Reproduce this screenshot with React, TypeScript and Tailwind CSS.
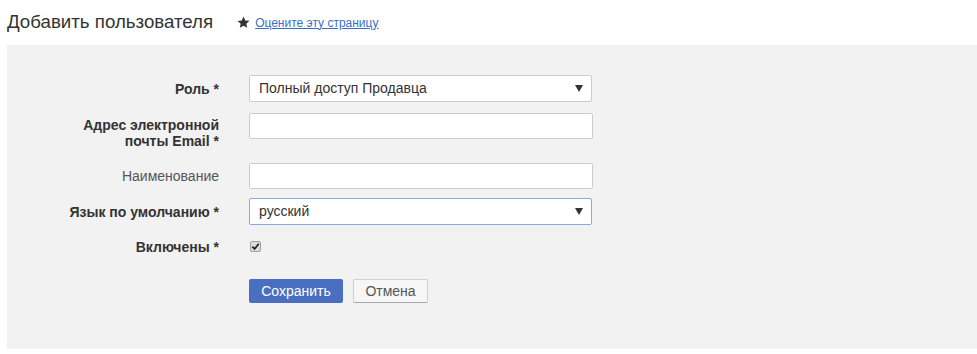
import React from "react";

function Select({ value, focused }: { value: string; focused?: boolean }) {
  return (
    <div
      className={`flex h-[27px] w-[343px] items-center justify-between rounded-[2px] border bg-white pl-[9px] pr-[8px] text-[14px] text-[#333] ${
        focused ? "border-[#86a9e8]" : "border-[#cccccc]"
      }`}
    >
      <span>{value}</span>
      <svg width="8" height="7" viewBox="0 0 8 7">
        <path d="M0 0 H8 L4 7 Z" fill="#333" />
      </svg>
    </div>
  );
}

function Input() {
  return <div className="h-[26px] w-[344px] rounded-[2px] border border-[#cccccc] bg-white" />;
}

function Label({ children, bold = true, extra = "" }: { children: React.ReactNode; bold?: boolean; extra?: string }) {
  return (
    <div
      className={`w-[150px] shrink-0 text-right text-[14px] leading-[16px] ${
        bold ? "font-bold text-[#333]" : "font-normal text-[#555]"
      } ${extra}`}
    >
      {children}
    </div>
  );
}

function Star() {
  return (
    <svg width="13" height="13" viewBox="0 0 24 24">
      <path
        d="M12 1l3.3 7.1 7.7.8-5.8 5.2 1.7 7.7L12 17.9l-6.9 3.9 1.7-7.7L1 9l7.7-.8z"
        fill="#333"
      />
    </svg>
  );
}

export default function App() {
  return (
    <div className="h-[354px] w-[977px] bg-white" style={{ fontFamily: '"Liberation Sans", Arial, sans-serif' }}>
      <div className="flex h-[45px] items-center pb-[2px] pl-[7px]">
        <h1 className="text-[18.7px] font-normal leading-[22px] text-[#333]">Добавить пользователя</h1>
        <div className="ml-[24px] flex items-center gap-[5px] pt-[2px]">
          <Star />
          <a href="#" className="text-[12px] leading-[14px] text-[#3b6fc6] underline">
            Оцените эту страницу
          </a>
        </div>
      </div>
      <div className="h-[304px] w-[970px] ml-[7px] bg-[#f2f2f2] pl-[62px] pt-[30px]">
        <div className="flex items-center gap-[30px]">
          <Label>Роль *</Label>
          <Select value="Полный доступ Продавца" />
        </div>
        <div className="mt-[11px] flex items-start gap-[30px]">
          <Label extra="pt-[4px]">{"Адрес электронной почты Email\u00a0*"}</Label>
          <Input />
        </div>
        <div className="mt-[14px] flex items-center gap-[30px]">
          <Label bold={false}>Наименование</Label>
          <Input />
        </div>
        <div className="mt-[9px] flex items-center gap-[30px]">
          <Label>Язык по умолчанию *</Label>
          <Select value="русский" focused />
        </div>
        <div className="mt-[12px] flex h-[20px] items-center gap-[30px]">
          <Label>Включены *</Label>
          <div className="-mt-[2px] ml-[1px] flex h-[11px] w-[11px] items-center justify-center rounded-[2px] border border-[#a0a0a0] bg-[#dcdcdc]">
            <svg width="9" height="9" viewBox="0 0 10 10">
              <path d="M1.5 5.2 L4 7.6 L8.6 2" stroke="#222" strokeWidth="2" fill="none" />
            </svg>
          </div>
        </div>
        <div className="ml-[180px] mt-[22px] flex gap-[10px]">
          <button className="h-[24px] w-[94px] rounded-[2px] bg-[#4a6fc1] text-[14px] text-white">Сохранить</button>
          <button className="h-[24px] w-[75px] rounded-[2px] border border-[#cfcfcf] border-b-[#a8a8a8] bg-[#f6f6f6] text-[14px] text-[#555]">
            Отмена
          </button>
        </div>
      </div>
    </div>
  );
}
